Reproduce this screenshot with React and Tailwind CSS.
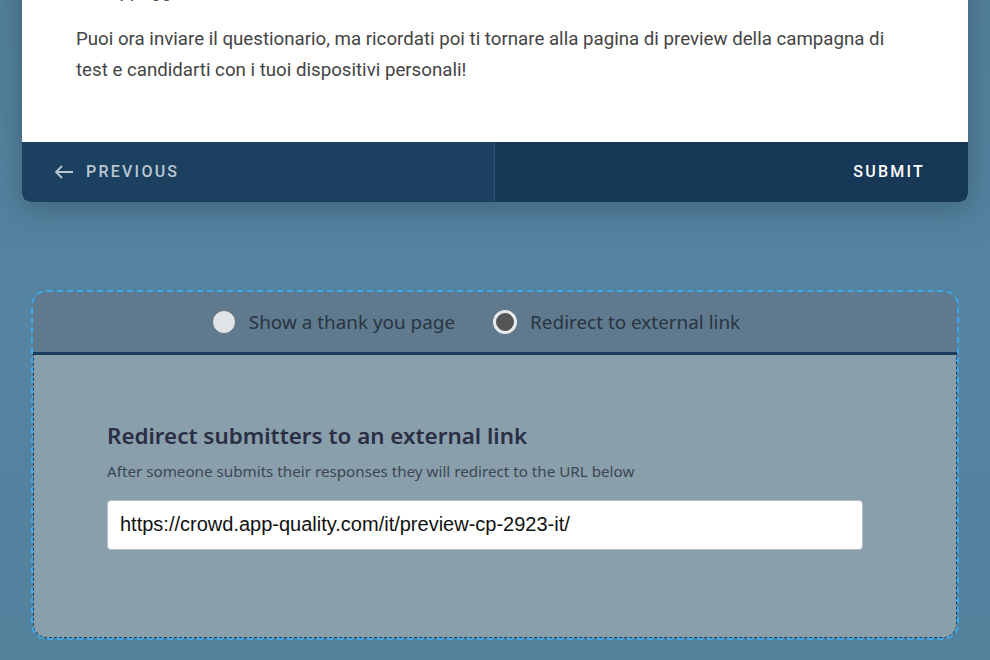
import { useState } from "react";

const Radio = ({ checked, label, onClick }) => (
  <label onClick={onClick} className="flex items-center gap-[13px] cursor-pointer">
    <span
      className={
        checked
          ? "w-6 h-6 rounded-full bg-[#555555] border-[3px] border-[#e6e9ec]"
          : "w-6 h-6 rounded-full bg-[#e1e5e9] border border-[#6b6f73]"
      }
    />
    <span className="text-[18.9px] text-[#2a3440]">{label}</span>
  </label>
);

const App = () => {
  const [mode, setMode] = useState("redirect");
  const [url, setUrl] = useState("https://crowd.app-quality.com/it/preview-cp-2923-it/");

  return (
    <div className="min-h-screen w-full bg-gradient-to-b from-[#537f9a] via-[#5484a0] to-[#52819c] overflow-hidden font-['Roboto',sans-serif]">
      {/* form card */}
      <div className="mx-[22px] -mt-[28px] bg-white rounded-b-lg shadow-[0_6px_28px_rgba(20,40,60,0.35)] overflow-hidden">
        <div className="pl-[54px] pr-[66px] pt-[4px] pb-[56px] text-[18.7px] leading-[31px] text-[#444]">
          <p className="mb-[17px]">Sull'appoggio</p>
          <p>
            Puoi ora inviare il questionario, ma ricordati poi ti tornare alla pagina di preview della campagna di
            test e candidarti con i tuoi dispositivi personali!
          </p>
        </div>
        <div className="flex h-[60px]">
          <button className="w-1/2 flex items-center gap-3 pl-8 bg-[#1b4060] border-r border-[#2d5373] text-[#b9c6d2] text-[16px] font-medium tracking-[0.14em]">
            <svg width="20" height="14" viewBox="0 0 20 14" fill="none" stroke="currentColor" strokeWidth="1.8">
              <path d="M19 7H2M8 1L2 7l6 6" />
            </svg>
            PREVIOUS
          </button>
          <button className="w-1/2 flex items-center justify-end pr-[43px] bg-[#173857] text-white text-[16px] font-medium tracking-[0.14em]">
            SUBMIT
          </button>
        </div>
      </div>

      {/* completion settings */}
      <div className="mx-[31px] mt-[88px] w-[928px] rounded-2xl border-2 border-dashed border-[#3ea8ec] overflow-hidden font-['Noto_Sans',sans-serif]">
        <div className="h-[63px] bg-[#5f7a8e] flex items-center justify-center gap-[38px] pr-[38px] border-b-[3px] border-[#1a3d5c]">
          <Radio checked={mode === "thanks"} label="Show a thank you page" onClick={() => setMode("thanks")} />
          <Radio checked={mode === "redirect"} label="Redirect to external link" onClick={() => setMode("redirect")} />
        </div>
        <div className="h-[283px] bg-[#8a9fac] pl-[73px] pt-[67px] border-x border-b border-dashed border-[#1a3d5c] rounded-b-[14px]">
          <h2 className="text-[22.4px] font-semibold text-[#2b2f45] leading-7">Redirect submitters to an external link</h2>
          <p className="mt-[10px] text-[15.2px] text-[#3b4651]">After someone submits their responses they will redirect to the URL below</p>
          <input
            value={url}
            onChange={(e) => setUrl(e.target.value)}
            className="mt-[17px] w-[756px] h-[50px] bg-white rounded border border-[#b5bcc2] px-3 text-[20px] text-[#111] font-['Liberation_Sans',sans-serif] outline-none"
          />
        </div>
      </div>
    </div>
  );
};

export default App;
